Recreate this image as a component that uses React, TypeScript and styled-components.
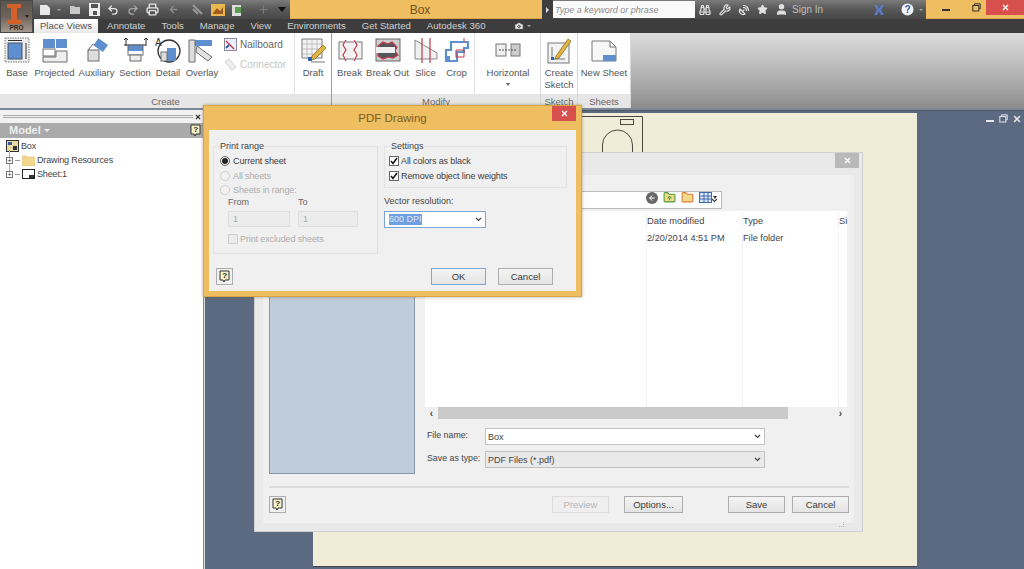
import React from "react";
import styled, { createGlobalStyle } from "styled-components";
import { Binoculars, Wrench, SatelliteDish, Star, User, Printer, Undo2, Redo2, Camera, Plus, ArrowLeft, FolderUp, FolderPlus } from "lucide-react";

const Global = createGlobalStyle`
  html, body { margin: 0; padding: 0; width: 1024px; height: 569px; overflow: hidden; }
  body { font-family: "Liberation Sans", Arial, sans-serif; font-size: 10px; color: #333; }
  * { box-sizing: border-box; }
`;

const Page = styled.div`
  position: relative; width: 1024px; height: 569px; overflow: hidden;
  display: flex; flex-direction: column; background: #5b6a80;
`;

/* ---------- title bar ---------- */
const TitleBar = styled.div`
  display: flex; height: 19px; flex: none;
  background: linear-gradient(#7b7b7b, #5a5a5a 45%, #474747);
`;
const Qat = styled.div`
  width: 290px; flex: none; display: flex; align-items: center; padding-left: 38px; color: #e4e4e4;
`;
const QatSlot = styled.span<{ $w: number }>`
  width: ${p => p.$w}px; flex: none; display: flex; justify-content: center; align-items: center;
`;
const QatDrop = styled.span`
  width: 0; height: 0; border-left: 2px solid transparent; border-right: 2px solid transparent; border-top: 2px solid #a8a8a8;
`;
const DocTitle = styled.div`
  width: 252px; flex: none; background: #efbe60; color: #6b5020; font-size: 12px; padding: 2px 0 0 8px;
  display: flex; align-items: center; justify-content: center; border-bottom: 1px solid #d9a84e;
`;
const SearchArrow = styled.div`
  width: 11px; flex: none; display: flex; align-items: center; justify-content: center; background: #3e3e3e;
  &::after { content: ""; border-left: 3px solid #ddd; border-top: 3px solid transparent; border-bottom: 3px solid transparent; }
`;
const SearchBox = styled.div`
  width: 142px; height: 17px; margin-top: 1px; flex: none; background: #fafafa; color: #8b8b8b;
  font-style: italic; font-size: 9px; padding: 4px 0 0 2px; white-space: nowrap;
`;
const HelpGroup = styled.div`
  flex: 1; display: flex; align-items: center; color: #e2e2e2;
`;
const SignIn = styled.span`
  color: #bdbdbd; font-size: 10px; width: 72px; padding-left: 1px; flex: none;
`;
const WinControls = styled.div`
  width: 98px; flex: none; background: #efbe60; display: flex; align-items: flex-start; border-bottom: 1px solid #d9a84e;
`;
const WinSlot = styled.span<{ $w: number }>`
  width: ${p => p.$w}px; height: 15px; flex: none; display: flex; align-items: center; justify-content: center;
`;
const WinClose = styled.span`
  width: 38px; height: 15px; flex: none; background: #d8504e; color: #fff; display: flex; align-items: center; justify-content: center;
`;

/* ---------- tab row ---------- */
const TabRow = styled.div`
  display: flex; height: 14px; flex: none; background: #3d3d3d; align-items: flex-end; padding-left: 34px;
`;
const ActiveTab = styled.div`
  width: 64px; height: 14px; background: linear-gradient(#fff, #e8e8e8); color: #555; text-align: center;
  font-size: 9.6px; line-height: 14px; margin-right: 9px; white-space: nowrap;
`;
const Tab = styled.div`
  color: #d0d0d0; font-size: 9.6px; line-height: 14px; margin-right: 16px; white-space: nowrap;
`;
const TabIcon = styled.span`
  color: #e4e4e4; display: flex; align-items: center; height: 14px; margin-left: 12px; gap: 3px;
`;

/* ---------- ribbon ---------- */
const Ribbon = styled.div`
  display: flex; height: 77px; flex: none; background: linear-gradient(#dcdcdc, #a8a8a8 70%, #8c8c8c);
  border-bottom: 2px solid #7b8696;
`;
const Panel = styled.div<{ $w: number; $strong?: boolean }>`
  width: ${p => p.$w}px; flex: none; display: flex; flex-direction: column; background: #fff;
  border-right: 1px solid ${p => (p.$strong ? "#9c9c9c" : "#d8d8d8")};
`;
const Tools = styled.div`
  height: 61px; flex: none; display: flex;
`;
const PanelLabel = styled.div`
  height: 14px; flex: none; background: #e6e6e6; color: #666; font-size: 9.5px; line-height: 16px; text-align: center;
  overflow: hidden; white-space: nowrap;
`;
const Tool = styled.div<{ $w: number; $rule?: boolean }>`
  width: ${p => p.$w}px; flex: none; display: flex; flex-direction: column; align-items: center; padding-top: 4px;
  border-right: ${p => (p.$rule ? "1px solid #e0e0e0" : "none")};
`;
const ToolGlyph = styled.div`
  width: 28px; height: 27px; flex: none; display: flex; align-items: center; justify-content: center;
`;
const ToolText = styled.div`
  margin-top: 3px; color: #555; font-size: 9.5px; line-height: 12px; text-align: center; white-space: nowrap;
`;
const ToolCaret = styled.div`
  width: 0; height: 0; margin-top: 4px;
  border-left: 2px solid transparent; border-right: 2px solid transparent; border-top: 3px solid #666;
`;
const SideCol = styled.div`
  width: 75px; flex: none; display: flex; flex-direction: column; gap: 7px; padding: 5px 0 0 4px; border-right: 1px solid #e0e0e0;
`;
const SideItem = styled.div<{ $off?: boolean }>`
  display: flex; align-items: center; gap: 3px; font-size: 10px; height: 13px; color: ${p => (p.$off ? "#c6c6c6" : "#666")};
`;
const RibbonRest = styled.div`flex: 1;`;

/* ---------- workspace ---------- */
const Workspace = styled.div`
  flex: 1; display: flex; min-height: 0;
`;
const Browser = styled.div`
  width: 204px; flex: none; display: flex; flex-direction: column; background: #fff; border-right: 1px solid #8d8d8d;
`;
const Grip = styled.div`
  height: 13px; flex: none; background: #f1f1f1; display: flex; align-items: center; gap: 2px; padding: 0 2px 0 3px;
  font-size: 9px; font-weight: bold; color: #222;
`;
const GripLine = styled.div`
  flex: 1; height: 3px; border-top: 1px solid #aaa; border-bottom: 1px solid #aaa;
`;
const BrowserHead = styled.div`
  height: 15px; flex: none; background: #aaaaaa; color: #eeeeee; font-weight: bold; font-size: 11px;
  display: flex; align-items: center; justify-content: space-between; padding: 0 2px 1px 9px;
`;
const Caret = styled.span`
  display: inline-block; width: 0; height: 0; margin-left: 3px; vertical-align: 2px;
  border-left: 3px solid transparent; border-right: 3px solid transparent; border-top: 3px solid #eee;
`;
const Tree = styled.div`
  padding: 1px 0 0 6px; display: flex; flex-direction: column;
`;
const TreeRow = styled.div`
  height: 14px; display: flex; align-items: center; gap: 2px; color: #444; font-size: 9px; letter-spacing: -.15px; white-space: nowrap;
`;
const Expander = styled.span`
  position: relative; width: 7px; height: 7px; border: 1px solid #777; font-size: 7px; line-height: 5px; text-align: center; color: #333; flex: none;
  &::before { content: ""; position: absolute; left: 2px; top: -8px; width: 1px; height: 7px; background: #aaa; }
`;
const Dash = styled.span`
  width: 5px; height: 1px; background: #999; flex: none;
`;
const Mdi = styled.div`
  position: relative; flex: 1; background: #5b6a80; border-top: 1px solid #4d5868; border-left: 1px solid #d8d8d8;
`;
const Sheet = styled.div`
  position: absolute; left: 108px; top: 2px; width: 604px; height: 454px;
  background: #efecd8; border-bottom: 1px solid #3f4650;
`;
const DrawingOutline = styled.svg`
  position: absolute; left: 250px; top: 2px;
`;
const MdiButtons = styled.div`
  position: absolute; right: 3px; top: 3px; display: flex; gap: 5px; color: #e6e6e6; align-items: center;
`;

/* ---------- save dialog ---------- */
const SaveWindow = styled.div`
  position: absolute; left: 49px; top: 41px; width: 609px; height: 380px;
  background: #e9e9e9; border: 1px solid #cfcfcf; display: flex; flex-direction: column;
`;
const SaveTitle = styled.div`
  height: 22px; flex: none; display: flex; justify-content: flex-end; padding-right: 3px;
`;
const GreyClose = styled.span`
  width: 24px; height: 15px; background: #b9b9b9; color: #fff; display: flex; align-items: center; justify-content: center;
`;
const SaveBody = styled.div`
  flex: 1; margin: 0 8px 8px; background: #f0f0f0; padding: 14px 5px 0 6px; display: flex; flex-direction: column; min-height: 0;
`;
const SaveMain = styled.div`
  display: flex; gap: 10px; height: 285px; flex: none;
`;
const PlacesBar = styled.div`
  width: 146px; flex: none; background: #bfccdc; border: 1px solid #8a97a4;
`;
const SaveRight = styled.div`
  flex: 1; display: flex; flex-direction: column; min-width: 0; padding-right: 2px;
`;
const LookRow = styled.div`
  height: 22px; flex: none; display: flex; justify-content: flex-end; align-items: center; padding-right: 124px; gap: 4px;
`;
const LookCombo = styled.div`
  width: 216px; height: 18px; margin-right: 1px; background: #fff; border: 1px solid #bbb; display: flex; align-items: center; justify-content: flex-end; padding-right: 3px; color: #555;
`;
const FileList = styled.div`
  height: 196px; flex: none; background: #fff; display: flex; flex-direction: column;
`;
const ListHead = styled.div`
  display: grid; grid-template-columns: 221px 96px 96px 1fr; height: 18px; padding-top: 1px; align-items: center; color: #444; font-size: 9.3px;
`;
const ListRow = styled.div`
  display: grid; grid-template-columns: 221px 96px 96px 1fr; flex: 1; padding-top: 4px; color: #444; font-size: 9.2px;
`;
const ListCell = styled.div`
  height: 100%; border-left: 1px solid #f2f2f2; white-space: nowrap;
`;
const HeadCell = styled(ListCell)`
  display: flex; align-items: center;
`;
const Scroller = styled.div`
  height: 12px; flex: none; display: flex; align-items: center; color: #444; font-size: 10px; font-weight: bold;
`;
const ScrollArrow = styled.span`
  width: 13px; flex: none; text-align: center;
`;
const ScrollThumb = styled.div`
  width: 350px; height: 12px; background: #c9c9c9; flex: none;
`;
const ScrollGap = styled.div`flex: 1;`;
const FormBlock = styled.div`
  position: absolute; left: 220px; top: 317px; display: flex; flex-direction: column; gap: 6px;
`;
const FormRow = styled.div`
  display: flex; align-items: center; height: 17px; margin-left: 2px;
`;
const FormLabel = styled.div`
  width: 58px; flex: none; color: #444; font-size: 8.8px; white-space: nowrap; padding-bottom: 3px;
`;
const FormCombo = styled.div<{ $fill?: string }>`
  width: 280px; height: 17px; background: ${p => p.$fill || "#fff"}; border: 1px solid #c2c2c2; color: #444; font-size: 9px;
  display: flex; align-items: center; justify-content: space-between; padding: 0 3px 0 2px;
`;
const Divider = styled.div`
  height: 2px; margin-top: 12px; flex: none; background: #dcdcdc;
`;
const SaveFooter = styled.div`
  display: flex; align-items: center; margin-top: 8px;
`;
const Spacer = styled.div<{ $w?: number }>`
  ${p => (p.$w ? `width:${p.$w}px;flex:none;` : "flex:1;")}
`;
const Btn = styled.div<{ $w: number; $off?: boolean; $primary?: boolean }>`
  width: ${p => p.$w}px; height: 17px; flex: none; font-size: 9.5px; display: flex; align-items: center; justify-content: center;
  background: ${p => (p.$off ? "#efefef" : "linear-gradient(#f4f4f4,#e4e4e4)")};
  color: ${p => (p.$off ? "#b5b5b5" : "#3a3a3a")};
  border: 1px solid ${p => (p.$primary ? "#7fa6d6" : p.$off ? "#dcdcdc" : "#adadad")};
`;
const HelpBtn = styled.div`
  width: 17px; height: 17px; flex: none; border: 1px solid #adadad; background: #f0f0f0; display: flex; align-items: center; justify-content: center;
`;
const ResizeGrip = styled.div`
  position: absolute; right: 18px; bottom: 4px; width: 5px; height: 5px; border-right: 1px dotted #bbb; border-bottom: 1px dotted #bbb;
`;
const IconRow = styled.div`
  position: absolute; left: 441px; top: 80px; display: flex; gap: 5px; align-items: center;
`;
const ArrowDisc = styled.span`
  width: 12px; height: 12px; border-radius: 50%; background: #666; display: flex; align-items: center; justify-content: center;
`;

/* ---------- pdf dialog ---------- */
const PdfWindow = styled.div`
  position: absolute; left: 203px; top: 105px; width: 379px; height: 192px; z-index: 5;
  background: #efbe60; border: 1px solid #d5a548; box-shadow: 0 0 3px rgba(120,90,30,.5);
  display: flex; flex-direction: column; padding: 0 5px 5px;
`;
const PdfTitle = styled.div`
  position: relative; height: 24px; flex: none; color: #7a5c22; font-size: 11.5px; display: flex; align-items: center; justify-content: center;
`;
const PdfClose = styled.span`
  position: absolute; right: 0; top: 0; width: 24px; height: 15px; background: #d8504e; color: #fff;
  display: flex; align-items: center; justify-content: center;
`;
const PdfBody = styled.div`
  flex: 1; background: #f0f0f0; display: flex; flex-direction: column; padding: 10px 8px 0 4px; min-height: 0;
`;
const PdfColumns = styled.div`
  display: flex; gap: 6px; height: 114px; flex: none;
`;
const Group = styled.fieldset<{ $w: number; $h: number; $pad: number }>`
  width: ${p => p.$w}px; height: ${p => p.$h}px; margin: 0; padding: 2px 0 0 ${p => p.$pad}px; border: 1px solid #e3e3e3; min-width: 0;
  display: flex; flex-direction: column;
`;
const Legend = styled.legend<{ $shift: number }>`
  padding: 0; margin-left: ${p => p.$shift}px; color: #444; font-size: 9px; line-height: 12px;
`;
const OptionRow = styled.div<{ $off?: boolean }>`
  height: 14.5px; display: flex; align-items: center; gap: 1px; font-size: 9px; letter-spacing: -.12px; white-space: nowrap;
  color: ${p => (p.$off ? "#adadad" : "#3c3c3c")};
`;
const Radio = styled.span<{ $on?: boolean }>`
  width: 10px; height: 10px; border-radius: 50%; flex: none; margin-right: 2px; background: #f2f2f2;
  border: 1px solid ${p => (p.$on ? "#666" : "#d0d0d0")};
  display: flex; align-items: center; justify-content: center;
  &::after { content: ""; width: 6px; height: 6px; border-radius: 50%; background: ${p => (p.$on ? "#222" : "transparent")}; }
`;
const Check = styled.span<{ $off?: boolean }>`
  width: 10px; height: 10px; flex: none; margin-right: 1px; border: 1px solid ${p => (p.$off ? "#cfcfcf" : "#666")};
  background: ${p => (p.$off ? "#ececec" : "#fff")}; display: flex; align-items: center; justify-content: center;
`;
const RangeGrid = styled.div`
  display: grid; grid-template-columns: 62px 60px; column-gap: 8px; margin: -2px 0 0 8px; color: #666; font-size: 9px;
`;
const RangeLabel = styled.div`
  height: 15px; line-height: 13px;
`;
const RangeBox = styled.div`
  height: 16px; border: 1px solid #dedede; background: #ececec; color: #aaa; font-size: 9px; padding: 2px 0 0 4px;
`;
const Excluded = styled.div`
  margin: 5px 0 0 8px;
`;
const RightCol = styled.div`
  display: flex; flex-direction: column;
`;
const VectorLabel = styled.div`
  margin-top: 7px; color: #444; font-size: 9px; line-height: 12px;
`;
const VectorSelect = styled.div`
  width: 102px; height: 17px; margin-top: 4px; background: #fff; border: 1px solid #7fa6d6;
  display: flex; align-items: center; justify-content: space-between; padding: 0 3px 0 4px;
`;
const Selected = styled.span`
  background: #6f9fe0; color: #dfe8f5; font-size: 9px; line-height: 11px; white-space: nowrap;
`;
const PdfFooter = styled.div`
  display: flex; align-items: center; margin-top: 14px; padding-left: 3px;
`;

/* ---------- app button ---------- */
const AppMenu = styled.div`
  position: absolute; left: 0; top: 0; width: 33px; height: 33px; z-index: 3;
  background: linear-gradient(#5a5550, #6e6258 50%, #a59a8e); border: 1px solid #4a4a4a;
  display: flex; flex-direction: column; align-items: center;
`;
const AppLetter = styled.svg`margin: 3px 5px 0 0; flex: none;`;
const AppPro = styled.div`
  font-size: 6.5px; font-weight: bold; color: #3c2a20; line-height: 7px;
`;
const AppCaret = styled.span`
  position: absolute; right: 3px; top: 14px; width: 0; height: 0;
  border-left: 2px solid transparent; border-right: 2px solid transparent; border-top: 3px solid #222;
`;

/* ---------- drawings ---------- */
const Svg = ({ w = 28, h = 27, children }: { w?: number; h?: number; children: React.ReactNode }) => (
  <svg width={w} height={h} viewBox={`0 0 ${w} ${h}`} fill="none">{children}</svg>
);
const BLUE = "#5f8fcf", LINE = "#6d6d6d", RED = "#c03a48";

const icons: Record<string, React.ReactNode> = {
  base: <Svg><rect x="2" y="1" width="24" height="24" fill="#eee" stroke="#777" strokeDasharray="1.5 1" /><rect x="5" y="6" width="14" height="16" fill={BLUE} stroke="#456" /><path d="M5 3.5h14M23 6v16" stroke="#333" /></Svg>,
  projected: <Svg><rect x="2" y="2" width="12" height="9" fill={BLUE} /><rect x="15" y="2" width="11" height="9" fill={BLUE} /><rect x="2" y="12" width="12" height="7" fill="#fff" stroke={LINE} /><path d="M15 14h11v11H2v-5h13z" fill="#eee" stroke={LINE} /></Svg>,
  auxiliary: <Svg><path d="M15 1l10 7-5 7-10-7z" fill={BLUE} /><path d="M15 1l-4 6" stroke="#fff" /><rect x="5" y="13" width="11" height="11" fill="#ddd" stroke={LINE} /><path d="M5 13l5-6" stroke={LINE} /></Svg>,
  section: <Svg><path d="M3 3l2-2 2 2M5 2v7M23 3l2-2 2 2M25 2v7M3 8h22" stroke="#333" /><rect x="7" y="8" width="15" height="6" fill={BLUE} /><rect x="7" y="8" width="15" height="10" stroke={LINE} /><rect x="9" y="18" width="11" height="6" fill="#eee" stroke={LINE} /></Svg>,
  detail: <Svg><circle cx="15" cy="14" r="11" stroke="#333" strokeWidth="1.3" /><rect x="13" y="11" width="9" height="13" fill={BLUE} /><rect x="7" y="15" width="6" height="9" fill="#ddd" stroke={LINE} /><text x="1" y="9" fontFamily="Liberation Sans" fontSize="10" fill="#333">A</text></Svg>,
  overlay: <Svg><path d="M1 3h23v6H1z" fill={BLUE} /><path d="M1 3h6v22H1z" fill="#ddd" stroke={LINE} /><path d="M9 9l15 11-4 4L8 15z" fill="#e2e2e2" stroke={LINE} /></Svg>,
  draft: <Svg><path d="M3 2h20v19H3z" fill="#f4f4f4" stroke="#777" /><path d="M3 7h20M3 12h20M3 17h20M8 2v19M13 2v19M18 2v19" stroke="#aaa" strokeWidth=".7" /><path d="M13 19L24 8l3 3-11 11-4 1z" fill="#e2b33f" stroke="#7a6020" strokeWidth=".7" /><rect x="9" y="20" width="4" height="4" fill="#2c63b8" /><path d="M12 25h14" stroke="#777" /></Svg>,
  break: <Svg><rect x="3" y="5" width="23" height="17" fill="#f2f2f2" stroke="#777" /><path d="M10 3l-3 5 3 5-3 5 3 6M18 3l3 5-3 5 3 5-3 6" stroke={RED} strokeWidth="1.2" fill="#fff" /></Svg>,
  breakout: <Svg><rect x="2" y="2" width="24" height="22" fill="#cfcfcf" stroke="#666" /><path d="M4 9l5-4 5 2 4-2 5 5-2 4 3 4-5 3-5-1-5 2-5-3z" fill="#55565a" stroke={RED} strokeWidth="1.2" /><rect x="2" y="10" width="19" height="6" fill="#eee" /></Svg>,
  slice: <Svg><path d="M3 3l22 13v6H3z" fill="#f0f0f0" stroke="#888" /><path d="M10 1v25M18 1v25" stroke={RED} strokeWidth="1.2" /></Svg>,
  crop: <Svg><path d="M8 5h17v6h-4v4H14v9H3V13h5z" fill="none" stroke={BLUE} strokeWidth="2.2" /><path d="M21 1v4M13 13h8v7h-8z" stroke={RED} /><rect x="3" y="19" width="4" height="4" fill={BLUE} /></Svg>,
  horizontal: <Svg><rect x="2" y="7" width="10" height="12" fill="#eee" stroke="#777" /><rect x="17" y="7" width="9" height="12" fill="#ccc" stroke="#777" /><path d="M5 13h18" stroke="#555" strokeDasharray="2 1" /></Svg>,
  sketch: <Svg><rect x="3" y="6" width="21" height="20" fill="#f3f3f3" stroke="#777" /><path d="M7 10v12h13" stroke="#777" /><rect x="6" y="20" width="3" height="3" fill="#2c63b8" /><path d="M11 19L23 2l3 2-12 17-4 1z" fill="#e2b33f" stroke="#7a6020" strokeWidth=".7" /></Svg>,
  newsheet: <Svg><path d="M2 4h18l6 6v14H2z" fill="#f7f7f7" stroke="#777" /><path d="M20 4v6h6" stroke="#777" /><rect x="13" y="18" width="13" height="6" fill={BLUE} /></Svg>,
};

const QHelp = ({ s = 11 }: { s?: number }) => (
  <svg width={s} height={s + 2} viewBox="0 0 11 13">
    <path d="M1 1h9v9H6l-1 2-1-2H1z" fill="#f6f2c8" stroke="#333" />
    <text x="3.2" y="8.3" fontFamily="Liberation Sans" fontSize="8" fontWeight="bold" fill="#222">?</text>
  </svg>
);
const Chevron = () => (
  <svg width="7" height="5" viewBox="0 0 7 5" fill="none"><path d="M1 1l2.5 2.5L6 1" stroke="#444" strokeWidth="1.2" /></svg>
);
const Tick = () => (
  <svg width="8" height="8" viewBox="0 0 8 8" fill="none"><path d="M1 4l2 2.5L7 1" stroke="#111" strokeWidth="1.5" /></svg>
);
const Cross = ({ s = 7, c = "#fff" }: { s?: number; c?: string }) => (
  <svg width={s} height={s} viewBox="0 0 7 7" fill="none"><path d="M1 1l5 5M6 1L1 6" stroke={c} strokeWidth="1.3" /></svg>
);
const Restore = ({ c }: { c: string }) => (
  <svg width="9" height="9" viewBox="0 0 9 9" fill="none"><path d="M2.5 2V.8h5.7v5H7" stroke={c} /><rect x=".8" y="2.5" width="6" height="5.5" stroke={c} /></svg>
);
const Minus = ({ c }: { c: string }) => (
  <svg width="8" height="9" viewBox="0 0 8 9"><rect x="0" y="6" width="8" height="2" fill={c} /></svg>
);

const tools1: [string, string, number][] = [
  ["base", "Base", 34], ["projected", "Projected", 41], ["auxiliary", "Auxiliary", 43],
  ["section", "Section", 34], ["detail", "Detail", 32], ["overlay", "Overlay", 36],
];
const tools2: [string, string, number][] = [
  ["break", "Break", 35], ["breakout", "Break Out", 41], ["slice", "Slice", 35], ["crop", "Crop", 27],
];

const TabNames = ["Annotate", "Tools", "Manage", "View", "Environments", "Get Started", "Autodesk 360"];

export default function App() {
  return (
    <Page>
      <Global />
      <AppMenu>
        <AppLetter width="14" height="20" viewBox="0 0 14 20">
          <path d="M0 0h14v4h-4v12h4v4H0v-4h4V4H0z" fill="#d2622a" />
        </AppLetter>
        <AppPro>PRO</AppPro>
        <AppCaret />
      </AppMenu>

      <TitleBar>
        <Qat>
          <QatSlot $w={14}><svg width="12" height="12" viewBox="0 0 12 12"><path d="M1 1h7l3 3v7H1z" fill="#e8e8e8" /></svg></QatSlot>
          <QatSlot $w={13}><QatDrop /></QatSlot>
          <QatSlot $w={20}><svg width="13" height="11" viewBox="0 0 13 11"><path d="M1 2h4l1 1h5v7H1z" fill="#c9c9c9" /></svg></QatSlot>
          <QatSlot $w={18}><svg width="11" height="13" viewBox="0 0 11 13"><rect width="11" height="13" fill="#eee" /><rect x="2" y="1" width="7" height="4" fill="#555" /><rect x="4" y="8" width="4" height="4" fill="#555" /></svg></QatSlot>
          <QatSlot $w={20}><Undo2 size={12} strokeWidth={2.5} /></QatSlot>
          <QatSlot $w={19}><Redo2 size={12} strokeWidth={2.5} color="#a5a5a5" /></QatSlot>
          <QatSlot $w={20}><Printer size={13} strokeWidth={2.5} /></QatSlot>
          <QatSlot $w={22}><ArrowLeft size={11} color="#8a8a8a" strokeWidth={3} /></QatSlot>
          <QatSlot $w={26}><svg width="11" height="11" viewBox="0 0 11 11"><path d="M1 1l9 9M1 5l5 5" stroke="#999" strokeWidth="2" /></svg></QatSlot>
          <QatSlot $w={16}><svg width="14" height="12" viewBox="0 0 14 12"><rect width="14" height="12" fill="#e9b94f" /><path d="M2 9l4-5 3 3 3-4v7H2z" fill="#a05a20" /></svg></QatSlot>
          <QatSlot $w={24}><svg width="13" height="13" viewBox="0 0 13 13"><rect x="0" y="2" width="9" height="11" fill="#ddd" /><rect x="3" y="4" width="6" height="6" fill="#5aa04c" /></svg></QatSlot>
          <QatSlot $w={27}><Plus size={13} color="#7d7d7d" /></QatSlot>
          <QatSlot $w={10}><svg width="8" height="5" viewBox="0 0 8 5"><path d="M0 0h8L4 5z" fill="#111" /></svg></QatSlot>
        </Qat>
        <DocTitle>Box</DocTitle>
        <SearchArrow />
        <SearchBox>Type a keyword or phrase</SearchBox>
        <HelpGroup>
          <QatSlot $w={20}><Binoculars size={12} strokeWidth={2.4} /></QatSlot>
          <QatSlot $w={19}><Wrench size={12} strokeWidth={2.4} /></QatSlot>
          <QatSlot $w={19}><SatelliteDish size={12} strokeWidth={2.4} /></QatSlot>
          <QatSlot $w={19}><Star size={11} fill="#e2e2e2" /></QatSlot>
          <QatSlot $w={19}><User size={13} fill="#e2e2e2" /></QatSlot>
          <SignIn>Sign In</SignIn>
          <QatSlot $w={32}>
            <svg width="12" height="12" viewBox="0 0 12 12"><path d="M1 1h3l2 4 2-4h3L8 6l3 5H8L6 7l-2 4H1l3-5z" fill="#5a7cc8" /></svg>
          </QatSlot>
          <QatSlot $w={24}>
            <svg width="13" height="13" viewBox="0 0 13 13"><circle cx="6.5" cy="6.5" r="6" fill="#f2f4fa" /><text x="3.6" y="10" fontFamily="Liberation Sans" fontSize="10" fontWeight="bold" fill="#3454a8">?</text></svg>
          </QatSlot>
          <QatDrop />
        </HelpGroup>
        <WinControls>
          <WinSlot $w={40}><Minus c="#333" /></WinSlot>
          <WinSlot $w={20}><Restore c="#333" /></WinSlot>
          <WinClose><Cross /></WinClose>
        </WinControls>
      </TitleBar>

      <TabRow>
        <ActiveTab>Place Views</ActiveTab>
        {TabNames.map(n => <Tab key={n}>{n}</Tab>)}
        <TabIcon><Camera size={10} fill="#e4e4e4" color="#3d3d3d" /><QatDrop /></TabIcon>
      </TabRow>

      <Ribbon>
        <Panel $w={332} $strong>
          <Tools>
            {tools1.map(([k, l, w]) => (
              <Tool key={k} $w={w}><ToolGlyph>{icons[k]}</ToolGlyph><ToolText>{l}</ToolText></Tool>
            ))}
            <SideCol>
              <SideItem>
                <svg width="13" height="13" viewBox="0 0 13 13"><rect x=".5" y=".5" width="12" height="12" fill="#eef" stroke="#889" /><path d="M2 3l8 8" stroke={RED} strokeWidth="1.5" /><path d="M2 10l3-3" stroke="#36a" strokeWidth="2" /></svg>
                Nailboard
              </SideItem>
              <SideItem $off>
                <svg width="13" height="13" viewBox="0 0 13 13"><path d="M1 4l4-3 7 8-4 3z" fill="#eee" stroke="#d0d0d0" /></svg>
                Connector
              </SideItem>
            </SideCol>
            <Tool $w={36}><ToolGlyph>{icons.draft}</ToolGlyph><ToolText>Draft</ToolText></Tool>
          </Tools>
          <PanelLabel>Create</PanelLabel>
        </Panel>
        <Panel $w={209}>
          <Tools>
            {tools2.map(([k, l, w]) => (
              <Tool key={k} $w={w}><ToolGlyph>{icons[k]}</ToolGlyph><ToolText>{l}</ToolText></Tool>
            ))}
            <Spacer $w={4} />
            <Tool $w={1} $rule />
            <Tool $w={66}><ToolGlyph>{icons.horizontal}</ToolGlyph><ToolText>Horizontal</ToolText><ToolCaret /></Tool>
          </Tools>
          <PanelLabel>Modify</PanelLabel>
        </Panel>
        <Panel $w={37}>
          <Tools>
            <Tool $w={36}><ToolGlyph>{icons.sketch}</ToolGlyph><ToolText>Create<br />Sketch</ToolText></Tool>
          </Tools>
          <PanelLabel>Sketch</PanelLabel>
        </Panel>
        <Panel $w={53}>
          <Tools>
            <Tool $w={52}><ToolGlyph>{icons.newsheet}</ToolGlyph><ToolText>New Sheet</ToolText></Tool>
          </Tools>
          <PanelLabel>Sheets</PanelLabel>
        </Panel>
        <RibbonRest />
      </Ribbon>

      <Workspace>
        <Browser>
          <Grip><GripLine /><Cross s={6} c="#222" /></Grip>
          <BrowserHead>
            <span>Model<Caret /></span>
            <QHelp />
          </BrowserHead>
          <Tree>
            <TreeRow>
              <svg width="13" height="12" viewBox="0 0 13 12"><rect x=".5" y=".5" width="12" height="11" fill="#e8d9a0" stroke="#333" /><rect x="2" y="2" width="4" height="3" fill="#3c5aa0" /><rect x="7" y="6" width="4" height="4" fill="#333" /></svg>
              Box
            </TreeRow>
            <TreeRow>
              <Expander>+</Expander><Dash />
              <svg width="13" height="12" viewBox="0 0 13 12"><path d="M0 2h5l1 1h7v9H0z" fill="#f1d68e" stroke="#d9bb70" strokeWidth=".5" /></svg>
              Drawing Resources
            </TreeRow>
            <TreeRow>
              <Expander>+</Expander><Dash />
              <svg width="13" height="10" viewBox="0 0 13 10"><rect x=".5" y=".5" width="12" height="9" fill="#fff" stroke="#222" /><rect x="7" y="6" width="5" height="3" fill="#333" /></svg>
              Sheet:1
            </TreeRow>
          </Tree>
        </Browser>

        <Mdi>
          <Sheet>
            <DrawingOutline width="90" height="42" viewBox="0 0 90 42" fill="none">
              <path d="M0 1.5h79.5V42" stroke="#4a4a40" />
              <rect x="57.5" y="4.5" width="13" height="5" stroke="#4a4a40" />
              <path d="M39.5 42V30a15 15 0 0 1 30 0v12" stroke="#4a4a40" />
            </DrawingOutline>
          </Sheet>
          <MdiButtons>
            <Minus c="#e6e6e6" />
            <Restore c="#e6e6e6" />
            <Cross s={8} c="#e6e6e6" />
          </MdiButtons>

          <SaveWindow>
            <SaveTitle><GreyClose><Cross /></GreyClose></SaveTitle>
            <SaveBody>
              <SaveMain>
                <PlacesBar />
                <SaveRight>
                  <LookRow>
                    <LookCombo><Chevron /></LookCombo>
                  </LookRow>
                  <FileList>
                    <ListHead>
                      <span />
                      <HeadCell>Date modified</HeadCell>
                      <HeadCell>Type</HeadCell>
                      <HeadCell>Si</HeadCell>
                    </ListHead>
                    <ListRow>
                      <span />
                      <ListCell>2/20/2014 4:51 PM</ListCell>
                      <ListCell>File folder</ListCell>
                      <ListCell />
                    </ListRow>
                  </FileList>
                  <Scroller>
                    <ScrollArrow>‹</ScrollArrow>
                    <ScrollThumb />
                    <ScrollGap />
                    <ScrollArrow>›</ScrollArrow>
                  </Scroller>
                </SaveRight>
              </SaveMain>
              <Divider />
              <SaveFooter>
                <HelpBtn><QHelp /></HelpBtn>
                <Spacer />
                <Btn $w={57} $off>Preview</Btn>
                <Spacer $w={15} />
                <Btn $w={59}>Options...</Btn>
                <Spacer $w={45} />
                <Btn $w={57}>Save</Btn>
                <Spacer $w={7} />
                <Btn $w={57}>Cancel</Btn>
              </SaveFooter>
            </SaveBody>
            <ResizeGrip />
          </SaveWindow>
          <IconRow>
            <ArrowDisc><ArrowLeft size={8} color="#fff" strokeWidth={3} /></ArrowDisc>
            <FolderUp size={13} color="#4a9a3c" fill="#f2d98a" />
            <FolderPlus size={13} color="#e07a30" fill="#f2d98a" />
            <svg width="18" height="11" viewBox="0 0 18 11"><rect x=".5" y=".5" width="12" height="10" fill="#dfe8f5" stroke="#3c6ab0" /><path d="M1 4h11M1 7h11M5 1v9M9 1v9" stroke="#3c6ab0" /><path d="M14 4h4l-2 3z" fill="#333" /></svg>
          </IconRow>
          <FormBlock>
            <FormRow>
              <FormLabel>File name:</FormLabel>
              <FormCombo>Box<Chevron /></FormCombo>
            </FormRow>
            <FormRow>
              <FormLabel>Save as type:</FormLabel>
              <FormCombo $fill="#e9e9e9">PDF Files (*.pdf)<Chevron /></FormCombo>
            </FormRow>
          </FormBlock>
        </Mdi>
      </Workspace>

      <PdfWindow>
        <PdfTitle>
          PDF Drawing
          <PdfClose><Cross /></PdfClose>
        </PdfTitle>
        <PdfBody>
          <PdfColumns>
            <Group $w={165} $h={114} $pad={6}>
              <Legend $shift={0}>Print range</Legend>
              <OptionRow><Radio $on />Current sheet</OptionRow>
              <OptionRow $off><Radio />All sheets</OptionRow>
              <OptionRow $off><Radio />Sheets in range:</OptionRow>
              <RangeGrid>
                <RangeLabel>From</RangeLabel>
                <RangeLabel>To</RangeLabel>
                <RangeBox>1</RangeBox>
                <RangeBox>1</RangeBox>
              </RangeGrid>
              <Excluded>
                <OptionRow $off><Check $off />Print excluded sheets</OptionRow>
              </Excluded>
            </Group>
            <RightCol>
              <Group $w={183} $h={48} $pad={4}>
                <Legend $shift={2}>Settings</Legend>
                <OptionRow><Check><Tick /></Check>All colors as black</OptionRow>
                <OptionRow><Check><Tick /></Check>Remove object line weights</OptionRow>
              </Group>
              <VectorLabel>Vector resolution:</VectorLabel>
              <VectorSelect><Selected>600 DPI</Selected><Chevron /></VectorSelect>
            </RightCol>
          </PdfColumns>
          <PdfFooter>
            <HelpBtn><QHelp /></HelpBtn>
            <Spacer $w={198} />
            <Btn $w={55} $primary>OK</Btn>
            <Spacer $w={12} />
            <Btn $w={55}>Cancel</Btn>
          </PdfFooter>
        </PdfBody>
      </PdfWindow>
    </Page>
  );
}
